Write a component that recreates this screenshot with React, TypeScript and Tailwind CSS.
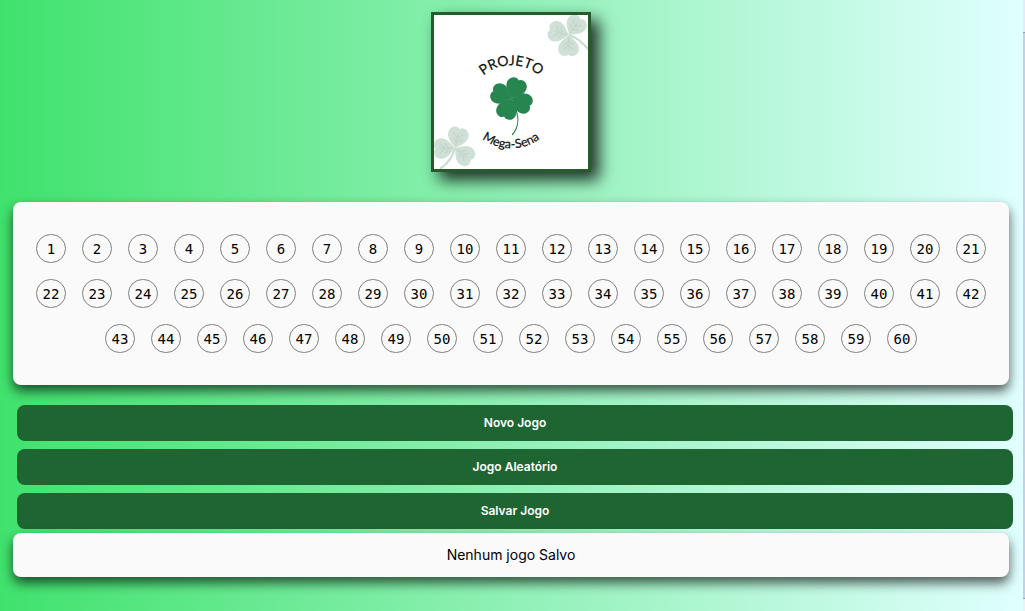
import { useState } from "react";

const LEAF =
  "M0 0 C-2.5 -3 -10 -6.5 -10.3 -13.5 C-10.5 -20.5 -3 -23 0 -19.5 C3 -23 10.5 -20.5 10.3 -13.5 C10 -6.5 2.5 -3 0 0 Z";
const VEINS =
  "M0 -2 V-15 M0 -6 L-5 -10 M0 -6 L5 -10 M0 -10 L-5 -15 M0 -10 L5 -15";

type PaleCloverProps = { x: number; y: number; angles: number[]; stem: string };

function PaleClover({ x, y, angles, stem }: PaleCloverProps) {
  return (
    <g transform={`translate(${x} ${y})`}>
      <path d={stem} fill="none" stroke="#c9ddd1" strokeWidth="2.2" />
      {angles.map((angle) => (
        <g key={angle} transform={`rotate(${angle})`}>
          <path d={LEAF} fill="#cfe0d6" />
          <path d={VEINS} fill="none" stroke="#c6d6cc" strokeWidth="1.5" />
        </g>
      ))}
    </g>
  );
}

function Logo() {
  return (
    <div className="size-40 border-3 border-[#265c2b] bg-white shadow-[8px_8px_15px_rgba(0,0,0,0.8)]">
      <svg viewBox="0 0 154 154" className="block size-full" role="img" aria-label="Projeto Mega-Sena">
        <defs>
          <path id="arc-top" d="M48 62 A43 43 0 0 1 107 62" />
          <path id="arc-bottom" d="M46 122 A48 48 0 0 0 108 122" />
        </defs>
        <PaleClover x={135} y={20} angles={[35, -74, 182]} stem="M0 0 C7 2 14 8 20 15" />
        <PaleClover x={21} y={133} angles={[14, -92, 127]} stem="M0 0 C-2 8 -8 16 -15 21" />
        <g transform="translate(77.5 83.5)">
          {[22, 112, 202, 292].map((angle) => (
            <path key={angle} d={LEAF} fill="#27864f" transform={`rotate(${angle})`} />
          ))}
          <path d="M-5.5 -13 L5.5 13 M-13 5.5 L13 -5.5" stroke="#308d58" strokeWidth="0.6" />
          <path d="M3.5 9 C8 19 7 29 1 36" fill="none" stroke="#27864f" strokeWidth="1.2" strokeLinecap="round" />
        </g>
        <g fill="#111111" stroke="#111111" strokeWidth="0.2" textAnchor="middle" className="font-['Lato',sans-serif]">
          <text fontSize="14">
            <textPath href="#arc-top" startOffset="50%">PROJETO</textPath>
          </text>
          <text fontSize="12.5">
            <textPath href="#arc-bottom" startOffset="50%">Mega-Sena</textPath>
          </text>
        </g>
      </svg>
    </div>
  );
}

const NUMBERS = Array.from({ length: 60 }, (_, i) => i + 1);
const ACTIONS = ["Novo Jogo", "Jogo Aleatório", "Salvar Jogo"];

export default function App() {
  const [selected, setSelected] = useState<number[]>([]);

  const toggle = (n: number) =>
    setSelected((current) =>
      current.includes(n)
        ? current.filter((item) => item !== n)
        : current.length < 6
          ? [...current, n]
          : current,
    );

  const run = (action: string) => {
    if (action === "Novo Jogo") setSelected([]);
    if (action === "Jogo Aleatório")
      setSelected([...NUMBERS].sort(() => Math.random() - 0.5).slice(0, 6));
  };

  return (
    <div className="flex min-h-screen font-['Inter',sans-serif] text-black">
      <main className="flex min-w-0 flex-1 flex-col bg-linear-to-r/srgb from-[#40e26d] to-[#e0ffff] pt-3 pr-[14px] pl-[13px]">
        <header className="flex justify-center">
          <Logo />
        </header>

        <section className="mt-[30px] flex flex-wrap justify-center rounded-lg bg-[#fafafa] px-3 py-6 shadow-[0_6px_12px_rgba(0,0,0,0.65)]">
          {NUMBERS.map((n) => (
            <button
              key={n}
              type="button"
              aria-pressed={selected.includes(n)}
              onClick={() => toggle(n)}
              className="m-2 flex h-[29px] w-[30px] items-center justify-center rounded-full border border-[#808080] font-['DejaVu_Sans_Mono',monospace] text-sm aria-pressed:bg-[#1e6531] aria-pressed:text-white"
            >
              {n}
            </button>
          ))}
        </section>

        <div className="mt-5 -mr-1 ml-1 flex flex-col gap-2">
          {ACTIONS.map((action) => (
            <button
              key={action}
              type="button"
              onClick={() => run(action)}
              className="h-9 rounded-lg bg-[#1e6531] pb-px text-xs font-semibold text-white"
            >
              {action}
            </button>
          ))}
        </div>

        <section className="mt-1 flex h-11 items-center justify-center rounded-lg bg-[#fafafa] shadow-[0_6px_12px_rgba(0,0,0,0.65)]">
          <p className="text-sm">Nenhum jogo Salvo</p>
        </section>
      </main>

      <div className="flex w-0.5 flex-col bg-[#f0f0f4]" aria-hidden="true">
        <div className="h-8 bg-[#e6eaf6]" />
        <div className="flex-1 border-y border-[#8f9bb5] bg-[#c6d0e4]" />
        <div className="h-3" />
      </div>
    </div>
  );
}
